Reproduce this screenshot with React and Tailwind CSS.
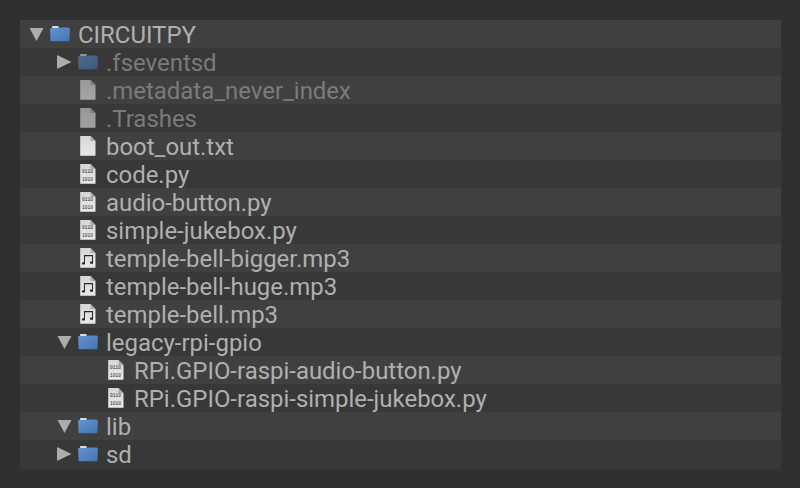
const rows = [
  ['CIRCUITPY', 'folder', 0, 'open'],
  ['.fseventsd', 'folder', 1, 'closed', true],
  ['.metadata_never_index', 'file', 1, null, true],
  ['.Trashes', 'file', 1, null, true],
  ['boot_out.txt', 'file', 1],
  ['code.py', 'py', 1],
  ['audio-button.py', 'py', 1],
  ['simple-jukebox.py', 'py', 1],
  ['temple-bell-bigger.mp3', 'mp3', 1],
  ['temple-bell-huge.mp3', 'mp3', 1],
  ['temple-bell.mp3', 'mp3', 1],
  ['legacy-rpi-gpio', 'folder', 1, 'open'],
  ['RPi.GPIO-raspi-audio-button.py', 'py', 2],
  ['RPi.GPIO-raspi-simple-jukebox.py', 'py', 2],
  ['lib', 'folder', 1, 'open'],
  ['sd', 'folder', 1, 'closed'],
];
const indents = ['pl-[2px]', 'pl-[30px]', 'pl-[58px]'];

function Arrow({ state }) {
  return (
    <svg className="h-7 w-7 shrink-0" viewBox="0 0 28 28" fill="#acacac">
      {state === 'open' && <path d="M7.5 8h14l-7 13z" />}
      {state === 'closed' && <path d="M7 7v14l14.5-7z" />}
    </svg>
  );
}

function Icon({ type, dim }) {
  const opacity = !dim ? '' : type === 'folder' ? 'opacity-55' : 'opacity-60';
  return (
    <svg className={`h-7 w-7 shrink-0 ${opacity}`} viewBox="0 0 28 28">
      <defs>
        <linearGradient id="blue" x1="0" y1="0" x2="1" y2="1">
          <stop offset="0" stopColor="#6495d0" />
          <stop offset="1" stopColor="#4473b2" />
        </linearGradient>
        <linearGradient id="paper" x1="0" y1="0" x2="0" y2="1">
          <stop offset="0" stopColor="#d6d6d6" />
          <stop offset="1" stopColor="#e9e9e9" />
        </linearGradient>
      </defs>
      {type === 'folder' ? (
        <>
          <path d="M2 7h17v2H2z" fill="#5b7595" opacity=".65" />
          <path d="M2.2 6h6.3v2.2H2.2z" fill="#dadddf" />
          <path d="M2 21h17.5v1H2z" fill="#263b59" opacity=".6" />
          <path d="M1.3 8h17.4q1.2 0 1.2 1.2L19.5 20q0 1.2-1.2 1.2H1.7q-1.2 0-1.2-1.2L.1 9.2Q.1 8 1.3 8z" fill="url(#blue)" />
        </>
      ) : (
        <>
          <path d="M2.2 4h10.3l5 5v14.8H2.2z" fill="url(#paper)" />
          <path d="M12.5 4v5h5z" fill="#aaa" />
        </>
      )}
      {type === 'py' && (
        <g fill="#292929" fontFamily="Liberation Mono" fontSize="5.4" textAnchor="middle">
          <text x="9.4" y="13.3" textLength="11" lengthAdjust="spacingAndGlyphs">0110</text>
          <text x="9.4" y="20.9" textLength="11" lengthAdjust="spacingAndGlyphs">1010</text>
        </g>
      )}
      {type === 'mp3' && (
        <g fill="#292929">
          <path d="M6 11h9v8.5h-1v-7.2H7V20H6z" />
          <rect x="4" y="18.2" width="3" height="2.2" rx=".7" />
          <rect x="12" y="17.5" width="3" height="2.2" rx=".7" />
        </g>
      )}
    </svg>
  );
}

export default function App() {
  return (
    <main className="h-[488px] w-[800px] bg-[#303030] p-5 pr-[19px]">
      <div className="border-b border-[#383838]">
        {rows.map(([name, type, level, arrow, dim], i) => (
          <div key={name} className={`flex h-7 items-center ${i % 2 ? 'bg-[#383838]' : 'bg-[#404040]'} ${indents[level]}`}>
            <Arrow state={arrow} />
            <Icon type={type} dim={dim} />
            <span className={`whitespace-pre pt-[2px] font-[Roboto] text-[23.95px] leading-7 ${dim ? 'text-[#7b7b7b]' : 'text-[#b0b0b0]'}`}>{name}</span>
          </div>
        ))}
      </div>
    </main>
  );
}
